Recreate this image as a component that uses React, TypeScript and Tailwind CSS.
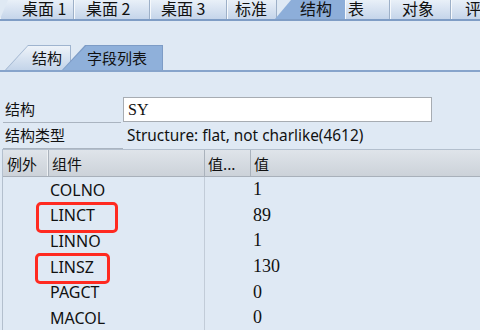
import React from 'react'

const topTabs = [
  { label: '桌面 1', cls: 'w-[74px] pl-[22px] [clip-path:polygon(8px_0,100%_0,100%_100%,0_100%)]' },
  { label: '桌面 2', cls: 'w-[76px] pl-[12px]' },
  { label: '桌面 3', cls: 'w-[77px] pl-[11px]' },
  { label: '标准', cls: 'w-[50px] pl-[8px]' },
]
const topTabsRight = [
  { label: '表', cls: 'w-[45px] pl-[3px]' },
  { label: '对象', cls: 'w-[61px] pl-[12px]' },
  { label: '评', cls: 'flex-1 pl-[14px]' },
]

const rows = [
  { name: 'COLNO', value: '1' },
  { name: 'LINCT', value: '89', mark: 'left-[33px] w-[82px]' },
  { name: 'LINNO', value: '1' },
  { name: 'LINSZ', value: '130', mark: 'left-[32px] w-[75px]' },
  { name: 'PAGCT', value: '0' },
  { name: 'MACOL', value: '0' },
]

export default function App() {
  return (
    <div className="w-[480px] h-[330px] overflow-hidden bg-[#dfe9f4] text-[#111] font-['Noto_Sans','Noto_Sans_CJK_SC',sans-serif]">
      {/* top tab strip */}
      <div className="flex h-[21px] border-b-2 border-[#7f9dc5] text-[16px] leading-[17px]">
        {topTabs.map((t) => (
          <div
            key={t.label}
            className={`${t.cls} shrink-0 whitespace-nowrap bg-gradient-to-b from-[#e9f0f8] to-[#c5d5ea] border-r border-[#9db0c8] shadow-[inset_1px_0_0_#f6f9fc] font-['Noto_Sans_CJK_SC',sans-serif]`}
          >
            {t.label}
          </div>
        ))}
        <div className="w-[70px] shrink-0 -ml-[2px] pl-[25px] bg-[#8daed9] [clip-path:polygon(16px_0,100%_0,100%_100%,0_100%)] font-['Noto_Sans_CJK_SC',sans-serif]">
          结构
        </div>
        {topTabsRight.map((t) => (
          <div
            key={t.label}
            className={`${t.cls} shrink-0 whitespace-nowrap bg-gradient-to-b from-[#e9f0f8] to-[#c5d5ea] border-r border-[#9db0c8] shadow-[inset_1px_0_0_#f6f9fc] font-['Noto_Sans_CJK_SC',sans-serif]`}
          >
            {t.label}
          </div>
        ))}
      </div>

      {/* sub tabs */}
      <div className="mt-[24px] flex h-[27px] items-end border-b-2 border-[#87a4cb] pl-[5px] text-[15px] leading-none font-['Noto_Sans_CJK_SC',sans-serif]">
        <div className="h-[25px] w-[66px] bg-[#9fb4cf] pt-[1px] [clip-path:polygon(23px_0,100%_0,100%_100%,0_100%)]">
          <div className="h-full bg-gradient-to-b from-[#eef3f9] to-[#c3d4e9] pl-[27px] pt-[4px] [clip-path:polygon(23px_0,calc(100%-1px)_0,calc(100%-1px)_100%,1px_100%)]">
            结构
          </div>
        </div>
        <div className="-ml-[9px] h-[25px] w-[101px] bg-[#7d9cc6] [clip-path:polygon(23px_0,100%_0,100%_100%,0_100%)]">
          <div className="h-full bg-[#8fb0da] pl-[25px] pt-[5px] [clip-path:polygon(24px_1px,calc(100%-1px)_1px,calc(100%-1px)_100%,1px_100%)]">
            字段列表
          </div>
        </div>
      </div>

      {/* header fields */}
      <div className="mt-[25px] flex h-[26px] items-center">
        <div className="flex h-full w-[118px] ml-[3px] items-center border-b border-[#aab4c0] pl-[2px] text-[15px] font-['Noto_Sans_CJK_SC',sans-serif]">
          结构
        </div>
        <div className="ml-[2px] flex h-[25px] w-[309px] items-center self-start border border-[#a7acb2] bg-white pl-[4px] text-[16px] font-['Liberation_Serif',serif]">
          SY
        </div>
      </div>
      <div className="flex h-[26px] items-center">
        <div className="flex h-full w-[120px] ml-[3px] items-center border-b border-[#aab4c0] pl-[2px] text-[15px] font-['Noto_Sans_CJK_SC',sans-serif]">
          结构类型
        </div>
        <div className="pl-[4px] text-[15.4px]">Structure: flat, not charlike(4612)</div>
      </div>

      {/* table */}
      <div className="ml-[2px] border-l border-t border-[#b3bfcd]">
        <div className="flex h-[27px] border-b border-[#a8b0ba] bg-gradient-to-b from-[#dfe4ea] to-[#ccd2d9] text-[15px] leading-none font-['Noto_Sans_CJK_SC',sans-serif]">
          <div className="flex w-[46px] items-center border-r border-[#aab2bc] pl-[4px] shadow-[inset_-1px_0_0_#eef1f4]">例外</div>
          <div className="flex w-[156px] items-center border-r border-[#aab2bc] pl-[3px]">组件</div>
          <div className="flex w-[46px] items-center border-r border-[#aab2bc] pl-[3px]">值...</div>
          <div className="flex flex-1 items-center pl-[3px]">值</div>
        </div>
        {rows.map((r) => (
          <div key={r.name} className="relative flex h-[25.6px] items-center">
            <div className="w-[46px]" />
            <div className="flex h-full w-[156px] items-center border-r border-[#c2ccd8] pl-[1px] text-[16px]">
              {r.name}
            </div>
            <div className="w-[46px]" />
            <div className="pl-[2px] text-[18px] font-['Liberation_Serif',serif]">{r.value}</div>
            {r.mark && (
              <div className={`absolute top-[-1px] h-[31px] rounded-[5px] border-[3px] border-[#ff2a20] ${r.mark}`} />
            )}
          </div>
        ))}
      </div>
    </div>
  )
}
